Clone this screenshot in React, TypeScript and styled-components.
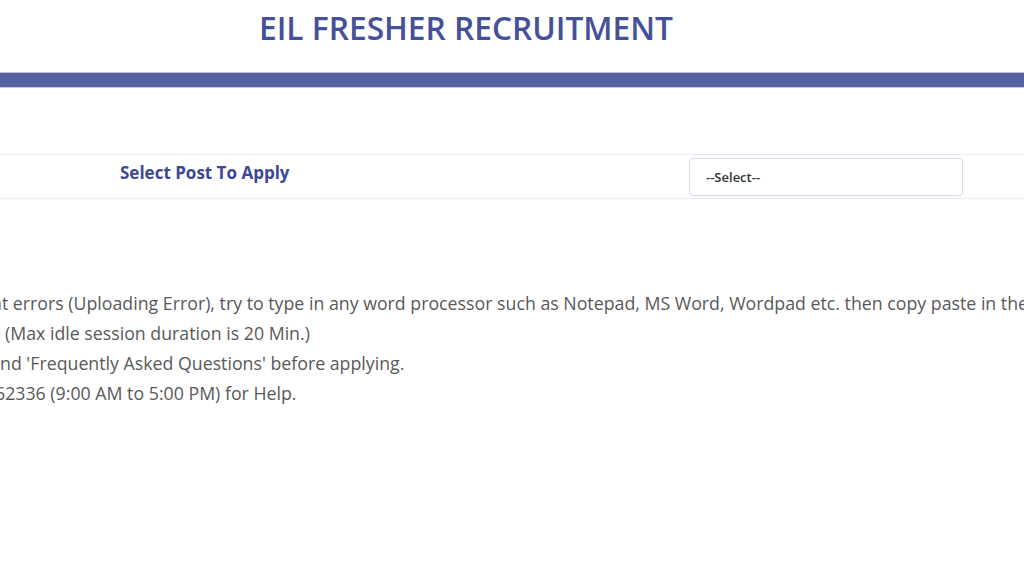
import styled, { createGlobalStyle } from "styled-components";

const GlobalStyle = createGlobalStyle`
  html, body {
    margin: 0;
    padding: 0;
    background: #fff;
    overflow: hidden;
  }
  body {
    font-family: "Open Sans", "Noto Sans", sans-serif;
    width: 1024px;
    height: 576px;
  }
`;

// page is scrolled a bit to the right, so the wrapper starts off-screen
const Page = styled.div`
  margin-left: -92px;
  width: 1116px;
  display: flex;
  flex-direction: column;
`;

const Header = styled.header`
  display: flex;
  justify-content: center;
  padding-top: 6px;
  height: 72px;
  box-sizing: border-box;
`;

const Title = styled.h1`
  margin: 0;
  font-size: 31.7px;
  font-weight: 600;
  color: #46509a;
  line-height: 44px;
`;

const Bar = styled.div`
  height: 14px;
  background: #5561a0;
  border-top: 1px solid #bcc0dc;
  border-bottom: 1px solid #c4c8e0;
`;

const PostRow = styled.div`
  margin-top: 66px;
  height: 43px;
  border-top: 1px solid #eee9f7;
  border-bottom: 1px solid #eee9f7;
  display: grid;
  grid-template-columns: 781px 274px 1fr;
  align-items: center;
`;

const PostLabel = styled.label`
  padding-left: 212px;
  font-size: 17px;
  font-weight: 700;
  color: #3e4892;
  margin-top: -8px;
`;

const SelectBox = styled.div`
  height: 38px;
  box-sizing: border-box;
  border: 1px solid #d9dde2;
  border-radius: 4px;
  display: flex;
  align-items: center;
  padding-left: 16px;
  font-size: 13px;
  font-weight: 600;
  color: #333;
`;

const Notes = styled.ul`
  list-style: none;
  margin: 89px 0 0 92px;
  padding: 0;
  display: flex;
  flex-direction: column;
`;

const Note = styled.li<{ $shift: number }>`
  white-space: nowrap;
  font-size: 17.75px;
  line-height: 30px;
  color: #595959;
  margin-left: ${(p) => p.$shift}px;
`;

const notes = [
  {
    shift: -9,
    text: "nt errors (Uploading Error), try to type in any word processor such as Notepad, MS Word, Wordpad etc. then copy paste in the",
  },
  { shift: 5, text: " (Max idle session duration is 20 Min.)" },
  { shift: 0, text: "nd 'Frequently Asked Questions' before applying." },
  { shift: -5, text: "62336 (9:00 AM to 5:00 PM) for Help." },
];

export default function App() {
  return (
    <>
      <GlobalStyle />
      <Page>
        <Header>
          <Title>EIL FRESHER RECRUITMENT</Title>
        </Header>
        <Bar />
        <PostRow>
          <PostLabel>Select Post To Apply</PostLabel>
          <SelectBox>--Select--</SelectBox>
        </PostRow>
        <Notes>
          {notes.map((n, i) => (
            <Note key={i} $shift={n.shift}>
              {n.text}
            </Note>
          ))}
        </Notes>
      </Page>
    </>
  );
}
